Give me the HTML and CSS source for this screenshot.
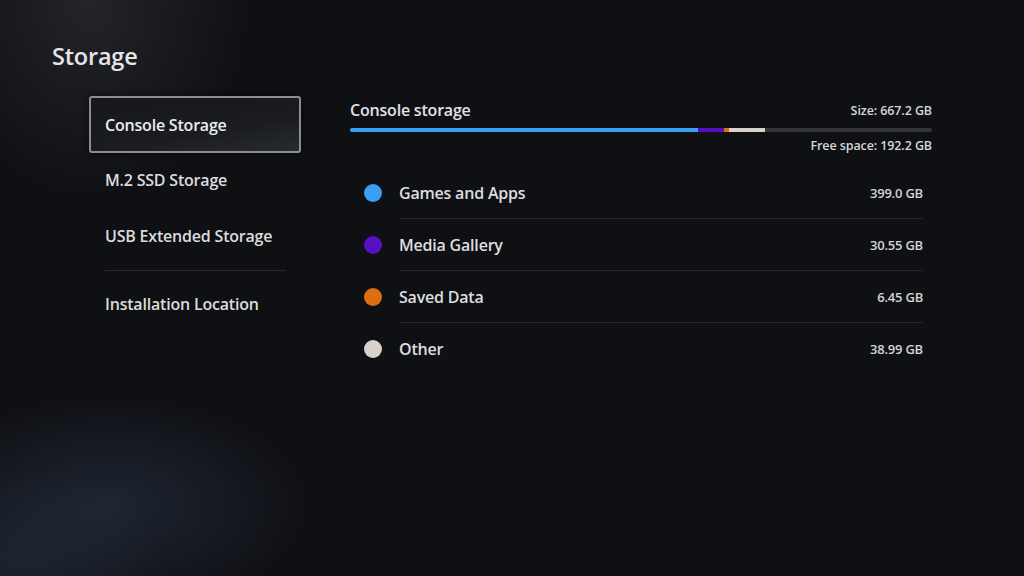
FILE: index.html
```html
<!DOCTYPE html>
<html lang="en">
<head>
<meta charset="utf-8">
<title>Storage</title>
<link rel="stylesheet" href="styles.css">
</head>
<body>
<div class="page">
  <h1 class="title">Storage</h1>
  <div class="main">
    <nav class="nav">
      <div class="nav-item selected">Console Storage</div>
      <div class="nav-item">M.2 SSD Storage</div>
      <div class="nav-item">USB Extended Storage</div>
      <div class="nav-divider"></div>
      <div class="nav-item">Installation Location</div>
    </nav>
    <section class="content">
      <div class="head-row">
        <span class="head-title">Console storage</span>
        <span class="meta">Size: 667.2 GB</span>
      </div>
      <div class="bar">
        <span class="seg games" style="width:348px"></span>
        <span class="seg media" style="width:26px"></span>
        <span class="seg saved" style="width:5px"></span>
        <span class="seg other" style="width:36px"></span>
      </div>
      <div class="free-row"><span class="meta">Free space: 192.2 GB</span></div>
      <ul class="list">
        <li class="row"><span class="dot games"></span><div class="info"><span class="label">Games and Apps</span><span class="value">399.0 GB</span></div></li>
        <li class="row"><span class="dot media"></span><div class="info"><span class="label">Media Gallery</span><span class="value">30.55 GB</span></div></li>
        <li class="row"><span class="dot saved"></span><div class="info"><span class="label">Saved Data</span><span class="value">6.45 GB</span></div></li>
        <li class="row"><span class="dot other"></span><div class="info last"><span class="label">Other</span><span class="value">38.99 GB</span></div></li>
      </ul>
    </section>
  </div>
</div>
</body>
</html>
```
FILE: styles.css
```css
* { box-sizing: border-box; }
html, body { margin: 0; padding: 0; }
body {
  width: 1024px;
  height: 576px;
  overflow: hidden;
  font-family: "Open Sans", "Noto Sans", sans-serif;
  color: #e4e4e6;
  background:
    radial-gradient(ellipse 160px 200px at 90px 0px, rgba(60,62,68,0.45), rgba(60,62,68,0) 100%),
    radial-gradient(ellipse 200px 110px at 110px 505px, rgba(40,52,70,0.6), rgba(40,52,70,0) 100%),
    radial-gradient(ellipse 140px 90px at 20px 560px, rgba(36,46,62,0.55), rgba(36,46,62,0) 100%),
    #0f1014;
}
.page {
  padding: 40px 0 0 52px;
}
.title {
  margin: 0;
  font-size: 23.5px;
  line-height: 32px;
  font-weight: 600;
  color: #e6e6e8;
  letter-spacing: -0.2px;
}
.main {
  display: flex;
  margin-top: 24px;
}
.nav {
  width: 212px;
  margin-left: 37px;
  display: flex;
  flex-direction: column;
}
.nav-item {
  height: 56px;
  display: flex;
  align-items: center;
  padding-left: 14px;
  font-size: 16px;
  font-weight: 600;
  color: #dcdcde;
  border: 2px solid transparent;
  border-radius: 3px;
  letter-spacing: -0.2px;
}
.nav-item.selected {
  height: 57px;
  margin-bottom: -1px;
  border-color: #8b8d93;
  background: linear-gradient(170deg, #16171c 0%, #1a1c21 60%, #272a30 100%);
  box-shadow: 0 0 6px rgba(0,0,0,0.6);
  color: #ececee;
}
.nav-divider {
  height: 1px;
  background: #2a2b30;
  margin: 6px 15px 5px 16px;
}
.content {
  width: 582px;
  margin-left: 49px;
  display: flex;
  flex-direction: column;
}
.head-row {
  height: 28px;
  display: flex;
  align-items: center;
  justify-content: space-between;
}
.head-title {
  font-size: 16px;
  font-weight: 600;
  color: #e2e2e4;
  letter-spacing: -0.2px;
}
.meta {
  font-size: 12.5px;
  font-weight: 600;
  color: #d6d6d8;
  letter-spacing: -0.1px;
}
.bar {
  margin-top: 4px;
  height: 4px;
  border-radius: 2px;
  background: #34353a;
  display: flex;
  overflow: hidden;
}
.seg { display: block; height: 100%; }
.games { background: #3a9ff2; }
.media { background: #5510c4; }
.saved { background: #de6f10; }
.other { background: #d7d3cc; }
.free-row {
  height: 26px;
  display: flex;
  align-items: center;
  justify-content: flex-end;
}
.list {
  list-style: none;
  margin: 9px 9px 0 13px;
  padding: 0;
}
.row {
  display: flex;
  align-items: stretch;
}
.dot {
  width: 18px;
  height: 18px;
  border-radius: 50%;
  margin: 17px 17px 0 1px;
  flex: none;
}
.info {
  flex: 1;
  height: 52px;
  display: flex;
  align-items: center;
  justify-content: space-between;
  border-bottom: 1px solid #24252a;
}
.info.last { border-bottom: none; }
.label {
  font-size: 16px;
  font-weight: 600;
  color: #dedee0;
  letter-spacing: -0.2px;
}
.value {
  font-size: 13px;
  font-weight: 600;
  color: #d4d4d6;
  letter-spacing: -0.2px;
}
```
